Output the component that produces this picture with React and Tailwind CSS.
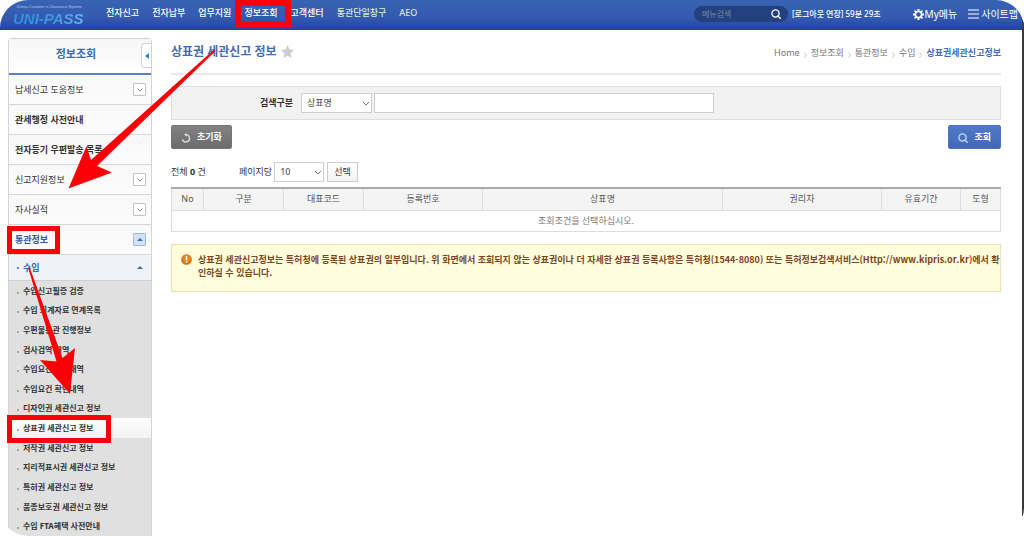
import React from "react";

const NAV = ["전자신고", "전자납부", "업무지원", "정보조회", "고객센터", "통관단일창구", "AEO"];

const MENU = [
  { label: "납세신고 도움정보", expandable: true },
  { label: "관세행정 사전안내", strong: true },
  { label: "전자등기 우편발송 목록", strong: true },
  { label: "신고지원정보", expandable: true },
  { label: "자사실적", expandable: true },
  { label: "통관정보", expandable: true, open: true },
];

const SUBMENU = [
  "수입신고필증 검증",
  "수입 회계자료 연계목록",
  "우편물통관 진행정보",
  "검사검역 내역",
  "수입요건 신청내역",
  "수입요건 확인내역",
  "디자인권 세관신고 정보",
  "상표권 세관신고 정보",
  "저작권 세관신고 정보",
  "지리적표시권 세관신고 정보",
  "특허권 세관신고 정보",
  "품종보호권 세관신고 정보",
  "수입 FTA혜택 사전안내",
];

const COLUMNS = [
  { label: "No", width: "w-8" },
  { label: "구분", width: "w-20" },
  { label: "대표코드", width: "w-20" },
  { label: "등록번호", width: "w-[119px]" },
  { label: "상표명", width: "w-auto" },
  { label: "권리자", width: "w-[159px]" },
  { label: "유효기간", width: "w-[79px]" },
  { label: "도형", width: "w-10" },
];

function SearchIcon({ className }) {
  return (
    <svg viewBox="0 0 10 10" className={className} fill="none" stroke="currentColor" aria-hidden="true">
      <circle cx="4.5" cy="4.4" r="3.6" strokeWidth="1.3" />
      <path d="M7 7 9.4 9.4" strokeWidth="1.4" strokeLinecap="round" />
    </svg>
  );
}

function GearIcon() {
  return (
    <svg viewBox="0 0 20 20" className="size-[11px]" aria-hidden="true">
      <g stroke="#fff" strokeWidth="3.6">
        <path d="M10 0v20M0 10h20M2.9 2.9l14.2 14.2M17.1 2.9 2.9 17.1" />
      </g>
      <circle cx="10" cy="10" r="7" fill="#fff" />
      <circle cx="10" cy="10" r="4" fill="#2f53a9" />
    </svg>
  );
}

function SelectBox({ id, className, children, ...rest }) {
  return (
    <div className={"relative " + className}>
      <select
        id={id}
        className="block h-5 w-full appearance-none border border-[#cfcfcf] bg-white pl-[5px] text-[9px] leading-[18px] text-[#444]"
        {...rest}
      >
        {children}
      </select>
      <svg
        viewBox="0 0 8 5"
        className="pointer-events-none absolute top-2 right-[2px] h-[5px] w-2"
        fill="none"
        stroke="#777"
        aria-hidden="true"
      >
        <path d="M1 1l3 3 3-3" />
      </svg>
    </div>
  );
}

function Header() {
  return (
    <header className="flex h-[30px] items-center bg-linear-to-b from-[#3963b3] via-[#335ab0] via-60% to-[#2443a0] pr-[6px] pl-[13px] text-white">
      <a href="#home" className="flex w-[93px] flex-col pt-px">
        <span className="pl-1 font-['Liberation_Sans'] text-[4px] leading-[6px] whitespace-nowrap text-[#b5c8ef]">
          Korea Customs e-Clearance System
        </span>
        <span className="bg-linear-to-r from-[#2f8fe0] via-[#3f9ae4] via-45% to-[#8accf0] bg-clip-text font-['Liberation_Sans',sans-serif] text-[15px] leading-[18px] font-bold whitespace-nowrap text-transparent italic">
          UNI-PASS
        </span>
      </a>
      <nav className="flex gap-[13px] pb-1 text-[9px] leading-4 font-medium">
        {NAV.map((item, i) => (
          <a key={item} href="#menu" className={i > 4 ? "text-[#dbe9d0]" : "text-white"}>
            {item}
          </a>
        ))}
      </nav>
      <div className="ml-auto flex items-center pb-[2px]">
        <form className="flex h-4 w-[94px] items-center rounded-full bg-[#23407f] pr-[7px] pl-2">
          <input
            type="text"
            aria-label="메뉴검색"
            placeholder="메뉴검색"
            className="min-w-0 flex-1 bg-transparent text-[8px] leading-3 placeholder:text-[#7c88a3]"
          />
          <button type="button" aria-label="검색">
            <SearchIcon className="size-[10px]" />
          </button>
        </form>
        <a href="#session" className="ml-1 text-[8px] leading-4 font-medium">
          [로그아웃 연장] 59분 29초
        </a>
        <a href="#my" className="ml-8 flex items-center gap-px text-[10px] leading-4">
          <GearIcon />
          My메뉴
        </a>
        <a href="#sitemap" className="ml-[11px] flex items-center gap-[2px] text-[10px] leading-4">
          <svg viewBox="0 0 11 10" className="h-[10px] w-[11px]" stroke="#fff" strokeWidth="1.2" aria-hidden="true">
            <path d="M0 1h11M0 5h11M0 9h11" />
          </svg>
          사이트맵
        </a>
      </div>
    </header>
  );
}

function Sidebar() {
  return (
    <aside className="flex w-36 shrink-0 flex-col rounded-t-sm border border-b-0 border-[#d4d4d4] bg-[#fafafa]">
      <div className="relative flex h-9 items-center justify-center border-b-2 border-[#5b82c6] bg-linear-to-b from-[#f6f6f6] to-white pr-2 pb-[5px]">
        <h2 className="text-[11px] leading-4 font-bold text-[#3e69b5]">정보조회</h2>
        <button
          type="button"
          aria-label="메뉴 접기"
          className="absolute top-1 right-0 flex h-[25px] w-[10px] items-center justify-center rounded-l-sm border border-r-0 border-[#d0d0d0] bg-white"
        >
          <svg viewBox="0 0 4 6" className="h-[6px] w-1" fill="#2a86c8" aria-hidden="true">
            <path d="M4 0v6L0 3z" />
          </svg>
        </button>
      </div>
      <ul>
        {MENU.map((m) => (
          <li
            key={m.label}
            className="flex h-[30px] items-center justify-between border-b border-[#d6d6d6] bg-linear-to-b from-[#f8f8f8] to-[#fcfcfc] pr-[5px] pl-[6px]"
          >
            <a
              href="#section"
              className={
                "text-[9px] leading-4 " +
                (m.open ? "font-bold text-[#2f5ba0]" : m.strong ? "font-bold text-[#333]" : "text-[#333]")
              }
            >
              {m.label}
            </a>
            {m.expandable && (
              <button
                type="button"
                aria-label={m.label}
                className={
                  "flex size-[13px] items-center justify-center rounded-[1px] border " +
                  (m.open ? "border-[#9fb8dc] bg-[#d5e2f5]" : "border-[#c2c2c2] bg-white")
                }
              >
                {m.open ? (
                  <svg viewBox="0 0 6 3" className="h-[3px] w-[6px]" fill="#3e6bb5" aria-hidden="true">
                    <path d="M0 3 3 0l3 3z" />
                  </svg>
                ) : (
                  <svg viewBox="0 0 6 4" className="h-1 w-[6px]" fill="none" stroke="#888" aria-hidden="true">
                    <path d="M.5.5 3 3 5.5.5" />
                  </svg>
                )}
              </button>
            )}
          </li>
        ))}
      </ul>
      <div className="flex h-[26px] items-center border-b border-[#d0d0d0] bg-[#eff2f7] pr-2 pl-2">
        <span className="size-[2px] bg-[#5f86c8]" />
        <a href="#import" className="ml-1 text-[9px] leading-4 font-bold text-[#3c68b4]">
          수입
        </a>
        <svg viewBox="0 0 6 3" className="ml-auto h-[3px] w-[6px]" fill="#3e6bb5" aria-hidden="true">
          <path d="M0 3 3 0l3 3z" />
        </svg>
      </div>
      <ul className="grid flex-1 auto-rows-fr bg-[#e0e0e0]">
        {SUBMENU.map((s, i) => (
          <li
            key={s}
            className={
              "flex items-center pl-2 " + (i === 7 ? "bg-linear-to-b from-[#fdfdfd] to-[#f3f3f3]" : "")
            }
          >
            <span className="mt-1 size-[2px] bg-[#aaa]" />
            <a href="#page" className="ml-1 text-[8px] leading-4 font-bold text-[#333]">
              {s}
            </a>
          </li>
        ))}
      </ul>
    </aside>
  );
}

function Crumb({ children }) {
  return (
    <>
      <a href="#crumb">{children}</a>
      <svg viewBox="0 0 3 6" className="mt-1 h-[6px] w-[3px]" fill="none" stroke="#bbb" strokeWidth=".8" aria-hidden="true">
        <path d="M.4.4 2.6 3 .4 5.6" />
      </svg>
    </>
  );
}

function Content() {
  return (
    <main className="min-w-0 flex-1 pr-[23px] pl-[19px]">
      <div className="flex h-[37px] items-center justify-between border-b-2 border-[#e8e8e8] pb-2">
        <h1 className="flex items-center gap-1 text-[12px] leading-5 font-bold text-[#456cb0]">
          상표권 세관신고 정보
          <svg viewBox="0 0 24 24" className="size-[13px]" fill="#ccc" aria-hidden="true">
            <path d="M12 0l3.6 8.3 8.4.8-6.4 6 1.9 8.9L12 19.3 4.5 24l1.9-8.9L0 9.1l8.4-.8z" />
          </svg>
        </h1>
        <nav aria-label="경로" className="flex items-center gap-1 pt-[2px] text-[9px] leading-4 text-[#777]">
          <Crumb>Home</Crumb>
          <Crumb>정보조회</Crumb>
          <Crumb>통관정보</Crumb>
          <Crumb>수입</Crumb>
          <a href="#current" className="font-bold text-[#3e6fc0]">
            상표권세관신고정보
          </a>
        </nav>
      </div>

      <form className="mt-[11px] flex h-[34px] items-center border border-[#ddd] bg-[#f2f2f2]">
        <label htmlFor="kind" className="w-[121px] text-right text-[9px] leading-4 font-bold text-[#333]">
          검색구분
        </label>
        <SelectBox id="kind" className="ml-2 w-[71px]" defaultValue="상표명">
          <option>상표명</option>
        </SelectBox>
        <input
          type="text"
          aria-label="검색어"
          className="ml-[2px] h-5 w-[340px] border border-[#cfcfcf] bg-white px-1 text-[9px]"
        />
      </form>

      <div className="mt-[5px] flex justify-between">
        <button
          type="button"
          className="flex h-6 items-center gap-[6px] rounded-[2px] border border-[#747474] bg-linear-to-b from-[#828282] to-[#6c6c6c] px-[9px] text-[9px] leading-4 font-bold text-white"
        >
          <svg viewBox="0 0 10 10" className="mt-[2px] size-[10px]" fill="none" stroke="#ddd" strokeWidth="1.4" aria-hidden="true">
            <path d="M4.8 1.6A3.7 3.7 0 1 1 1.3 6.4" />
            <path d="M5.6 0 3 1.7 5.6 3.4z" fill="#ddd" stroke="none" />
          </svg>
          초기화
        </button>
        <button
          type="button"
          className="flex h-6 items-center gap-[6px] rounded-[2px] border border-[#4a72bf] bg-linear-to-b from-[#5079c9] to-[#4269b5] px-[9px] text-[9px] leading-4 font-bold text-white"
        >
          <SearchIcon className="mt-[2px] size-[10px] text-[#c5d6f5]" />
          조회
        </button>
      </div>

      <div className="mt-[13px] flex h-5 items-center text-[9px] leading-4 text-[#333]">
        <p className="w-[68px]">
          전체 <b>0</b> 건
        </p>
        <label htmlFor="size">페이지당</label>
        <SelectBox id="size" className="ml-[2px] w-[50px]" defaultValue="10">
          <option>10</option>
        </SelectBox>
        <button
          type="button"
          className="ml-[3px] h-5 border border-[#ccc] bg-linear-to-b from-white to-[#f2f2f2] px-[6px] leading-4"
        >
          선택
        </button>
      </div>

      <table className="mt-[5px] w-full table-fixed border-collapse border border-t-2 border-[#ddd] border-t-[#aaa] text-center text-[9px] leading-4">
        <thead>
          <tr className="h-[22px] bg-[#f4f4f4] text-[#555]">
            {COLUMNS.map((c) => (
              <th key={c.label} scope="col" className={"border-r border-b border-[#ddd] p-0 font-normal " + c.width}>
                {c.label}
              </th>
            ))}
          </tr>
        </thead>
        <tbody>
          <tr className="h-[21px] text-[#777]">
            <td colSpan={8} className="p-0">
              조회조건을 선택하십시오.
            </td>
          </tr>
        </tbody>
      </table>

      <div className="mt-3 flex items-start gap-[6px] border border-[#ece3b4] bg-[#fffddc] pt-2 pb-3 pl-[9px]">
        <svg viewBox="0 0 12 12" className="mt-px size-[11px] shrink-0" aria-hidden="true">
          <circle cx="6" cy="6" r="5.8" fill="#d0731c" />
          <circle cx="6" cy="5" r="4.2" fill="#e08a2e" />
          <rect x="5.3" y="2.4" width="1.5" height="4.4" fill="#fff" />
          <rect x="5.3" y="7.9" width="1.5" height="1.5" fill="#fff" />
        </svg>
        <p className="font-['Noto_Sans_CJK_KR',sans-serif] text-[9px] leading-[13px] font-bold break-all text-[#7d4622]">
          상표권 세관신고정보는 특허청에 등록된 상표권의 일부입니다. 위 화면에서 조회되지 않는 상표권이나 더 자세한 상표권
          등록사항은 특허청(1544-8080) 또는 특허정보검색서비스(Http://www.kipris.or.kr)에서 확인하실 수 있습니다.
        </p>
      </div>
    </main>
  );
}

function Annotations() {
  return (
    <div className="pointer-events-none absolute inset-0" aria-hidden="true">
      <div className="absolute top-5 right-0 bottom-5 w-[2px] bg-[#3a3a3a]" />
      <div className="absolute top-0 left-[235px] h-7 w-14 border-[6px] border-[#fb0007]" />
      <div className="absolute top-[226px] left-[7px] h-7 w-[53px] border-[5px] border-[#fb0007]" />
      <div className="absolute top-[415px] left-[7px] h-7 w-[104px] border-[5px] border-[#fb0007]" />
      <svg className="absolute top-0 left-0 h-[400px] w-[220px]" viewBox="0 0 220 400" fill="#fb0007">
        <path d="M214 49.5 215.5 51 97 166 112 172.5 68.5 188.5 86.5 146 91 160z" />
        <path d="M28 267.5 29.5 267 62.5 358 75 348 70 394 40 360 56.5 361.5z" />
      </svg>
    </div>
  );
}

export default function App() {
  return (
    <div
      lang="ko"
      className="relative flex min-h-screen flex-col overflow-hidden rounded-[28px] bg-white font-['Noto_Sans','Noto_Sans_CJK_KR',sans-serif]"
    >
      <Header />
      <div className="flex flex-1 pt-2 pl-2">
        <Sidebar />
        <Content />
      </div>
      <Annotations />
    </div>
  );
}
